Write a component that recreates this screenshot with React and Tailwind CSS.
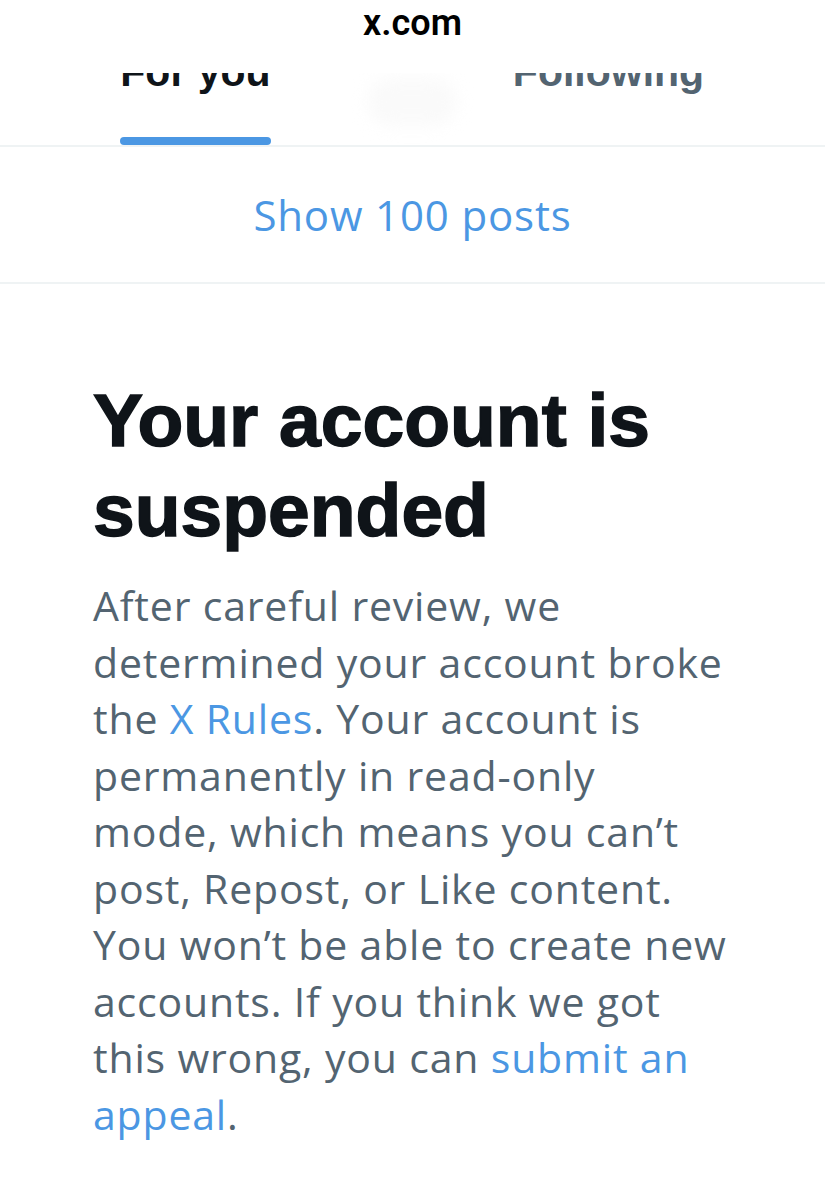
import React from 'react';

const heading = { fontFamily: '"Liberation Sans", Arial, sans-serif' };
const body = { fontFamily: '"Open Sans", "Liberation Sans", sans-serif' };

function Link({ children }) {
  return <span className="text-[#4b97e3]">{children}</span>;
}

export default function App() {
  const lines = [
    <>After careful review, we</>,
    <>determined your account broke</>,
    <>the <Link>X Rules</Link>. Your account is</>,
    <>permanently in read-only</>,
    <>mode, which means you can’t</>,
    <>post, Repost, or Like content.</>,
    <>You won’t be able to create new</>,
    <>accounts. If you think we got</>,
    <>this wrong, you can <Link>submit an</Link></>,
    <><Link>appeal</Link>.</>,
  ];

  return (
    <div className="relative w-[825px] h-[1200px] bg-white overflow-hidden">
      {/* browser address bar lying over the scrolled tabs */}
      <div className="absolute top-0 left-0 w-[825px] h-[73px] bg-white z-20 flex justify-center">
        <div
          className="pt-[5px] text-[36px] leading-none font-semibold text-black"
          style={{ fontFamily: 'Roboto, "Liberation Sans", sans-serif' }}
        >
          x.com
        </div>
      </div>

      {/* tabs */}
      <div className="relative border-b-2 border-[#eff3f4]">
        <div className="absolute left-[367px] top-[78px] w-[90px] h-[48px] rounded-full bg-[#fafafa] blur-sm" />
        <div className="relative flex ml-[-11px]" style={heading}>
          <div className="w-[413px] flex justify-center pt-[52px]">
            <div className="flex flex-col items-stretch">
              <span className="text-[41px] leading-none font-bold text-[#0f1419]">For you</span>
              <div className="mt-[44px] h-[8px] rounded-full bg-[#4b97e3]" />
            </div>
          </div>
          <div className="w-[413px] flex justify-center pt-[52px]">
            <span className="text-[41px] leading-none font-bold text-[#536471]">Following</span>
          </div>
        </div>
      </div>

      {/* show posts */}
      <div
        className="h-[137px] flex items-center justify-center border-b-2 border-[#eff3f4] text-[42px] leading-none text-[#4b97e3] tracking-[0.02em]"
        style={body}
      >
        Show 100 posts
      </div>

      {/* suspended notice */}
      <div className="pl-[93px] pr-[40px] pt-[91px]">
        <h1
          className="text-[75px] leading-[90px] font-bold text-[#0f1419] [-webkit-text-stroke:1.5px_#0f1419]"
          style={heading}
        >
          Your account is
          <br />
          suspended
        </h1>
        <div className="mt-[22px] text-[41px] leading-[56.5px] text-[#536471] tracking-[0.02em]" style={body}>
          {lines.map((l, i) => (
            <div key={i} className="whitespace-nowrap">
              {l}
            </div>
          ))}
        </div>
      </div>
    </div>
  );
}
